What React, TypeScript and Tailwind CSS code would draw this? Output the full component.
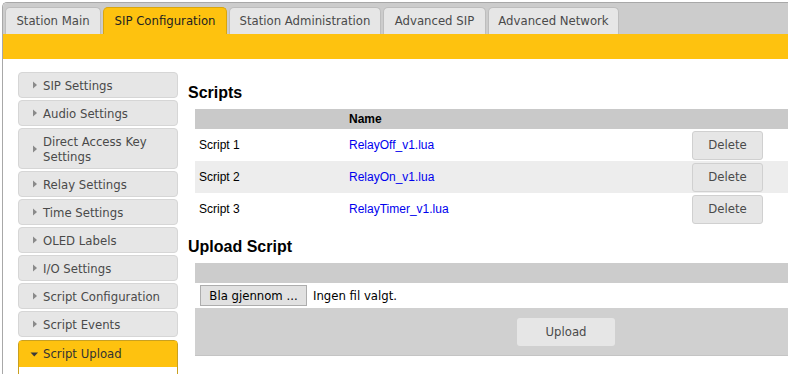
import React from "react";

const tabFont = { fontFamily: '"DejaVu Sans Condensed", "DejaVu Sans", sans-serif' };

const tabs = [
  { label: "Station Main", w: "w-[96px]" },
  { label: "SIP Configuration", w: "w-[124px]", active: true },
  { label: "Station Administration", w: "w-[152px]" },
  { label: "Advanced SIP", w: "w-[103px]" },
  { label: "Advanced Network", w: "w-[131px]" },
];

const menu: { label: string; two?: boolean }[] = [
  { label: "SIP Settings" },
  { label: "Audio Settings" },
  { label: "Direct Access Key Settings", two: true },
  { label: "Relay Settings" },
  { label: "Time Settings" },
  { label: "OLED Labels" },
  { label: "I/O Settings" },
  { label: "Script Configuration" },
  { label: "Script Events" },
];

function Tri({ open }: { open?: boolean }) {
  return open ? (
    <svg width="9" height="8" viewBox="0 0 9 8" className="shrink-0">
      <path d="M0.5 2.5 L8 2.5 L4.25 6.5 Z" fill="#3a3a3a" />
    </svg>
  ) : (
    <svg width="6" height="8" viewBox="0 0 6 8" className="shrink-0">
      <path d="M1 0.5 L5 4 L1 7.5 Z" fill="#8a8a8a" />
    </svg>
  );
}

const scripts = [
  { n: "Script 1", f: "RelayOff_v1.lua", bg: "bg-white" },
  { n: "Script 2", f: "RelayOn_v1.lua", bg: "bg-[#ededed]" },
  { n: "Script 3", f: "RelayTimer_v1.lua", bg: "bg-white" },
];

export default function App() {
  return (
    <div className="w-[788px] h-[374px] overflow-hidden bg-white pt-[2px] pl-[2px]">
      <div className="h-[400px] border-l border-t border-[#a8a8a8] rounded-tl-[5px] overflow-hidden">
        <div className="h-[31px] bg-[#cccccc] flex items-end gap-[2px] pl-[2px]" style={tabFont}>
          {tabs.map((t) => (
            <div
              key={t.label}
              className={`${t.w} h-[27px] rounded-t-[5px] border border-b-0 flex items-center justify-center text-[13px] ${
                t.active
                  ? "bg-[#fec20f] border-[#d9a60c] text-[#222]"
                  : "bg-[#e6e6e6] border-[#bdbdbd] text-[#4a4a4a]"
              }`}
            >
              {t.label}
            </div>
          ))}
        </div>
        <div className="h-[25px] bg-[#fec20f]" />
        <div className="flex">
          <div className="w-[175px] shrink-0 pl-[15px] pt-[13px] flex flex-col gap-[2px]" style={tabFont}>
            {menu.map((m) => (
              <div
                key={m.label}
                className={`w-[160px] ${m.two ? "h-[41px]" : "h-[26px]"} bg-[#e6e6e6] border border-[#d6d6d6] rounded-[4px] flex items-center pl-[13px] pr-2 gap-[5px] text-[13px] text-[#4a4a4a] leading-[15px]`}
              >
                <Tri />
                <span>{m.label}</span>
              </div>
            ))}
            <div className="mt-[1px] w-[160px] border border-[#c9a020] rounded-t-[4px]">
              <div className="h-[26px] bg-[#fec20f] flex items-center pl-[11px] gap-[4px] text-[13px] text-[#333]">
                <Tri open />
                <span>Script Upload</span>
              </div>
              <div className="h-[20px] bg-white" />
            </div>
          </div>
          <div className="flex-1 pl-[10px] pt-[25px]" style={{ fontFamily: '"Liberation Sans", Arial, sans-serif' }}>
            <h2 className="text-[16px] font-bold text-black leading-[18px]">Scripts</h2>
            <div className="ml-[7px] mt-[7px] w-[742px] text-[12px]">
              <div className="h-[20px] bg-[#c9c9c9] flex items-center font-bold text-black">
                <div className="w-[154px]" />
                <div>Name</div>
              </div>
              {scripts.map((s) => (
                <div key={s.n} className={`h-[32px] ${s.bg} flex items-center`}>
                  <div className="w-[154px] pl-[4px] text-black">{s.n}</div>
                  <div className="w-[343px] text-[#0000ee]">{s.f}</div>
                  <button
                    className="w-[71px] h-[29px] bg-[#e6e6e6] border border-[#d0d0d0] rounded-[3px] text-[13px] text-[#4a4a4a]"
                    style={tabFont}
                  >
                    Delete
                  </button>
                </div>
              ))}
            </div>
            <h2 className="mt-[13px] text-[16px] font-bold text-black leading-[18px]">Upload Script</h2>
            <div className="ml-[7px] mt-[7px] w-[742px] text-[12px]">
              <div className="h-[20px] bg-[#cccccc]" />
              <div className="h-[25px] bg-white flex items-center pl-[5px] gap-[6px]">
                <div className="h-[21px] w-[107px] bg-[#e1e1e1] border border-[#adadad] flex items-center justify-center text-black text-[13px]" style={tabFont}>
                  Bla gjennom ...
                </div>
                <span className="text-black text-[13px]" style={tabFont}>Ingen fil valgt.</span>
              </div>
              <div className="h-[48px] bg-[#d0d0d0] flex items-center justify-center border-b border-[#c4c4c4]">
                <div className="w-[98px] h-[28px] bg-[#e6e6e6] rounded-[3px] flex items-center justify-center text-[13px] text-[#4a4a4a]" style={tabFont}>
                  Upload
                </div>
              </div>
            </div>
          </div>
        </div>
      </div>
    </div>
  );
}
